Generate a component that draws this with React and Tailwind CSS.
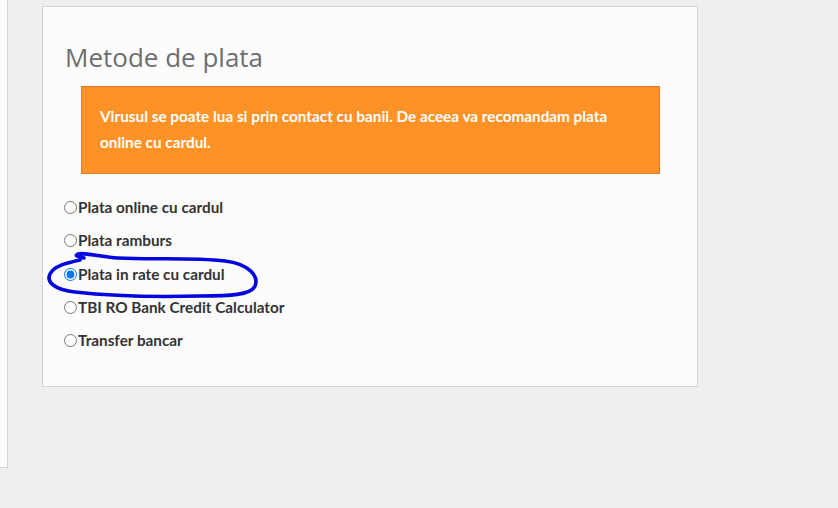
import React from "react";

const options = [
  { id: "card", label: "Plata online cu cardul" },
  { id: "ramburs", label: "Plata ramburs" },
  { id: "rate", label: "Plata in rate cu cardul" },
  { id: "tbi", label: "TBI RO Bank Credit Calculator" },
  { id: "transfer", label: "Transfer bancar" },
];

const App = () => {
  return (
    <div className="w-[838px] h-[508px] bg-[#efefef] flex items-start overflow-hidden">
      {/* left panel edge */}
      <div className="w-[8px] h-[468px] bg-[#fcfcfc] border-r border-b border-[#d6d6d6] shrink-0" />

      <div className="relative ml-[34px] mt-[6px] w-[656px] h-[381px] bg-[#fcfcfc] border border-[#d4d4d4] pl-[21px] pt-[34px]">
        <h2
          className="text-[26px] leading-[32px] text-[#6e6e6e] ml-[1px]"
          style={{ fontFamily: '"Open Sans", sans-serif' }}
        >
          Metode de plata
        </h2>

        <div
          className="mt-[13px] ml-[17px] w-[579px] bg-[#fe9227] border border-[#e97923] pl-[18px] pr-4 pt-[16px] pb-[18px] text-white font-bold text-[15.3px] leading-[26px]"
          style={{ fontFamily: "Lato, sans-serif" }}
        >
          Virusul se poate lua si prin contact cu banii. De aceea va recomandam plata
          <br />
          online cu cardul.
        </div>

        <div className="mt-[17px] flex flex-col">
          {options.map((opt) => (
            <label
              key={opt.id}
              className="h-[33.3px] flex items-center text-[#333333] font-bold text-[15.3px]"
              style={{ fontFamily: "Lato, sans-serif" }}
            >
              <input
                type="radio"
                name="pay"
                defaultChecked={opt.id === "rate"}
                className="m-0 mr-[1px] w-[13px] h-[13px]"
              />
              {opt.label}
            </label>
          ))}
        </div>

        {/* hand-drawn highlight */}
        <svg
          className="absolute left-0 top-0 pointer-events-none"
          width="656"
          height="381"
          viewBox="0 0 656 381"
        >
          <path
            d="M 41 251 C 35 249 31 249 35 247 C 41 245 57 250 75 251 C 107 253 147 250 182 254 C 206 257 216 269 212 279 C 208 288 187 289 157 289 C 117 290 67 289 32 285 C 12 283 3 275 7 267 C 11 259 23 256 37 253"
            fill="none"
            stroke="#0505e0"
            strokeWidth="3.6"
            strokeLinecap="round"
            strokeLinejoin="round"
          />
        </svg>
      </div>
    </div>
  );
};

export default App;
